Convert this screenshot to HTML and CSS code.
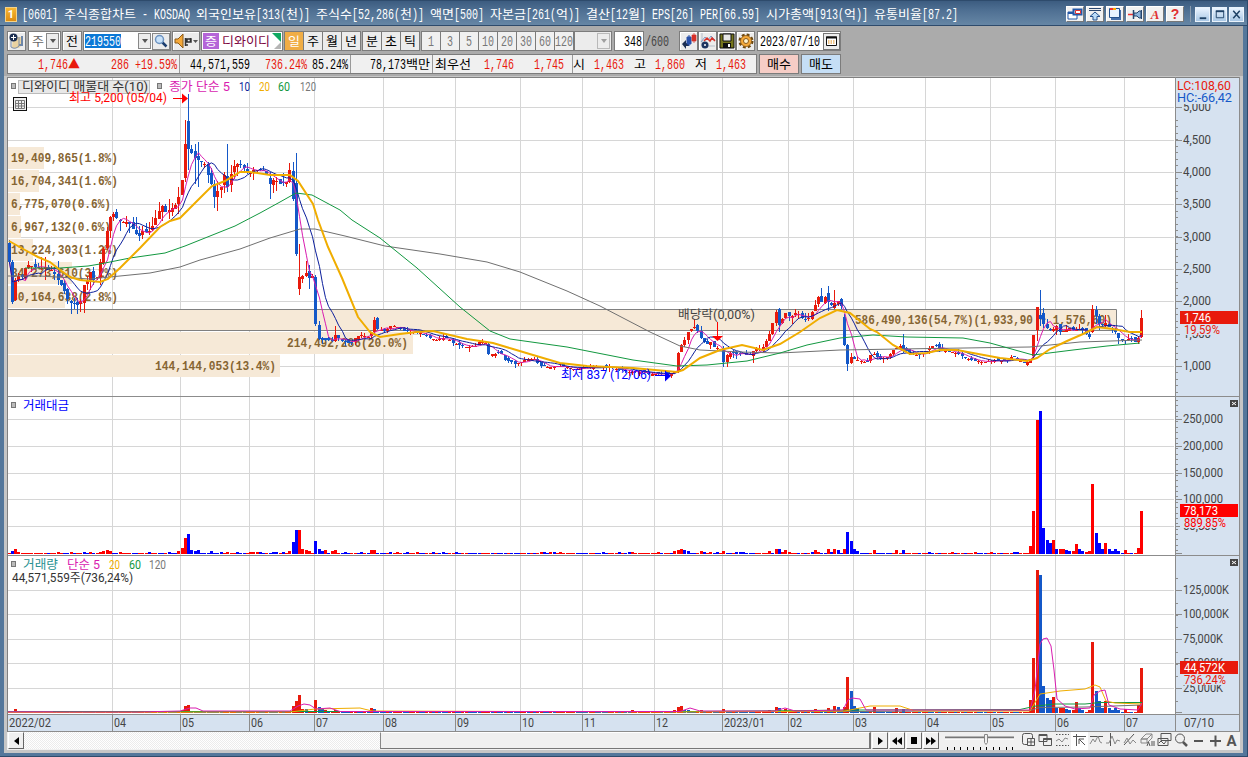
FILE: index.html
```html
<!DOCTYPE html>
<html lang="ko">
<head>
  <meta charset="UTF-8">
  <title>[0601] 주식종합차트</title>
  <link rel="stylesheet" href="styles.css">
</head>
<body>

<div class="window">
  <header class="titlebar">
    <span class="logo">1</span>
    <span class="label title">[0601] 주식종합차트 - KOSDAQ 외국인보유[313(천)] 주식수[52,286(천)] 액면[500] 자본금[261(억)] 결산[12월] EPS[26] PER[66.59] 시가총액[913(억)] 유통비율[87.2]</span>
    <div class="tools">
      <button><svg viewBox="0 0 16 14"><path d="M1 5h9v7H1z" fill="#fff" stroke="#2458a8"/><path d="M1 5h9v2H1z" fill="#2458a8"/><path d="M6.500 2.500h8v5h-8z" fill="#fff" stroke="#2458a8" stroke-width="2"/><path d="M8.500 3.500h5v3h-5z" fill="#fff" stroke="#d33"/></svg></button>
      <button><svg viewBox="0 0 16 14"><path d="M2 1.500h12M2 3.500h12" stroke="#2b4770"/><path d="M8 5l5 4.500h-3V13H6V9.500H3z" fill="#bcdcf8" stroke="#24508c"/></svg></button>
      <button><svg viewBox="0 0 16 14"><path d="M4 3h10v10H4z" fill="#456eaa"/><path d="M2.500 1.500h10v9h-10z" fill="#e8f2ff" stroke="#24508c"/><path d="M3 1h3v2H3z" fill="#e33"/><path d="M6 1h3v2H6z" fill="#fa0"/></svg></button>
      <button><svg viewBox="0 0 16 14"><path d="M1 7.500h5" stroke="#e33" stroke-width="1.500"/><path d="M6.500 3v9" stroke="#24446c" stroke-width="1.500"/><path d="M7 6h3l2-2h2v7h-2l-2-2H7z" fill="#8db4dc" stroke="#24446c"/><path d="M14.500 3v9" stroke="#24446c"/></svg></button>
      <button class="red-letter">A</button>
      <button class="red-letter q">?</button>
    </div>
    <div class="win-buttons">
      <button><svg viewBox="0 0 14 14"><path d="M4 11h7" stroke="#1f4266" stroke-width="2"/></svg></button>
      <button><svg viewBox="0 0 14 14"><path d="M3.500 3.500h8v7h-8z" fill="none" stroke="#1f4266"/><path d="M3 3.500h9" stroke="#1f4266" stroke-width="2"/></svg></button>
      <button><svg viewBox="0 0 14 14"><path d="M3.500 3l7 8M10.500 3l-7 8" stroke="#1f4266" stroke-width="1.600"/></svg></button>
    </div>
  </header>

  <div class="panel">
    <div class="toolbar">
      <button class="box w19"><svg width="15" height="16" viewBox="0 0 15 16"><path d="M4 4h9v8l-3 3H3z" fill="#ead2a0"/><path d="M13 3v9h-3" fill="none" stroke="#6d86a8" stroke-width="2"/><path d="M2 8v6q4 3 8-1V4" fill="none" stroke="#7a8ca8"/><circle cx="4.500" cy="4.500" r="4" fill="#1c2f52"/><path d="M4.500 2v5M2 4.500h5" stroke="#fff"/></svg></button>
      <div class="box white combo w33"><span class="label gray">주</span><i class="drop"></i></div>
      <button class="box w20"><span class="label">전</span></button>
      <div class="box white code"><span class="sel label">219550</span><i class="drop"></i><i class="search"><svg width="14" height="14" viewBox="0 0 14 14"><path d="M8 8l4.500 4.500" stroke="#1d3f70" stroke-width="2.500"/><circle cx="5.500" cy="5.500" r="4" fill="#c8e2fa" stroke="#6d93c0" stroke-width="1.500"/></svg></i></div>
      <button class="box speaker"><svg width="26" height="16" viewBox="0 0 26 16"><path d="M2 6h3l5-5v14l-5-5H2z" fill="#f5a93a" stroke="#8b5a18"/><path d="M12.500 5v8M14 6h4v3h-4zM17.500 5v4M12 12h3" stroke="#333" stroke-width="1.500" fill="none"/><path d="M20 7h5l-2.500 3z" fill="#555"/></svg></button>
      <div class="box white stock"><span class="label badge">증</span><span class="label name">디와이디</span><i class="corner"></i><i class="corner low"></i></div>
      <div class="group"><button class="on"><span class="label">일</span></button><button><span class="label">주</span></button><button><span class="label">월</span></button><button><span class="label">년</span></button></div>
      <div class="group"><button><span class="label">분</span></button><button><span class="label">초</span></button><button><span class="label">틱</span></button></div>
      <div class="group dim"><button><span class="label">1</span></button><button><span class="label">3</span></button><button><span class="label">5</span></button><button><span class="label">10</span></button><button><span class="label">20</span></button><button><span class="label">30</span></button><button><span class="label">60</span></button><button><span class="label">120</span></button></div>
      <div class="box combo off"><i class="drop"></i></div>
      <div class="box white count"><span class="label">348</span></div>
      <span class="label total">/600</span>
      <div class="icons">
        <button class="box w19"><svg width="16" height="16" viewBox="0 0 16 16"><path d="M1 11l4-4v3h3v3H5v3z" fill="#1c2f52"/><path d="M6 4h4v7H6zM8 2v11" fill="#2850a8" stroke="#2850a8"/><path d="M11 2h4v6h-4zM13 0v10" fill="#d8322a" stroke="#d8322a" stroke-width=".7"/></svg></button>
        <button class="box w19"><svg width="16" height="16" viewBox="0 0 16 16"><path d="M2 0v13h13" fill="none" stroke="#b5bdc8"/><path d="M1 9l4-5 3 3 3-4 4 4" fill="none" stroke="#7c9dc8"/><path d="M4 8l3-3 3 3 2-3 3 3" fill="none" stroke="#d8322a" stroke-width="1.500"/><circle cx="5" cy="12" r="3.500" fill="#1d3560"/><circle cx="5" cy="12" r="1" fill="#fff"/></svg></button>
        <button class="box w19"><svg width="16" height="16" viewBox="0 0 16 16"><path d="M1 1h14v14H1z" fill="#75751c" stroke="#111"/><path d="M4 1h8v7H4z" fill="#e8e8e8" stroke="#111"/><path d="M4 10h8v5H4z" fill="#111"/><path d="M9 11h2v3H9z" fill="#fff"/></svg></button>
        <button class="box w19"><svg width="16" height="16" viewBox="0 0 16 16"><circle cx="8" cy="8" r="6" fill="none" stroke="#6b4710" stroke-width="3" stroke-dasharray="2.700 2"/><circle cx="8" cy="8" r="5.500" fill="#f5a93a" stroke="#8b5a18" stroke-width=".8"/><circle cx="8" cy="8" r="2.500" fill="#fff3d0" stroke="#8b5a18"/></svg></button>
      </div>
      <div class="box white date"><span class="label">2023/07/10</span><i class="cal"><svg width="11" height="10" viewBox="0 0 11 10"><path d="M.5 1h10v8.500H.5z" fill="#fff" stroke="#111"/><path d="M0 1.500h11" stroke="#111" stroke-width="2"/><path d="M2 5h7M2 7h7" stroke="#e08a10" stroke-dasharray="1.500 1"/></svg></i></div>
    </div>

    <div class="quotes">
      <div class="strip">
        <div class="cell c1"><span class="label red">1,746▲</span><span class="label red">286 +19.59%</span></div>
        <div class="cell c2"><span class="label">44,571,559</span><span class="label red">736.24%</span><span class="label">85.24%</span></div>
        <div class="cell c3"><span class="label">78,173백만</span></div>
        <div class="cell c4"><span class="label">최우선</span><span class="label red">1,746</span><span class="label red">1,745</span></div>
        <div class="cell c5"><span class="label">시</span><span class="label red">1,463</span><span class="label">고</span><span class="label red">1,860</span><span class="label">저</span><span class="label red">1,463</span></div>
      </div>
      <button class="order buy"><span class="label">매수</span></button>
      <button class="order sell"><span class="label">매도</span></button>
    </div>
  </div>

  <div class="body">
    <svg id="chart" class="chart" viewBox="7 77 1233 655"></svg>

    <div class="bottom">
      <button class="sb"><svg width="5" height="8"><path d="M5 0v8L0 4z"/></svg></button>
      <div class="track"><div class="thumb"></div></div>
      <button class="sb"><svg width="5" height="8"><path d="M0 0v8l5-4z"/></svg></button>
      <button class="sb"><svg width="10" height="8"><path d="M5 0v8L0 4zM10 0v8L5 4z"/></svg></button>
      <button class="sb"><svg width="6" height="7"><path d="M0 0h6v7H0z"/></svg></button>
      <button class="sb"><svg width="10" height="8"><path d="M0 0v8l5-4zM5 0v8l5-4z"/></svg></button>
      <svg class="slider" width="72" height="18" viewBox="0 0 72 18"><path d="M1 5.500h69" stroke="#777" stroke-width="2"/><path d="M1 7h69" stroke="#fff"/><path d="M3.500 15v3M10.500 15v3M16.500 15v3M23.500 15v3M29.500 15v3M36.500 15v3M42.500 15v3M49.500 15v3M55.500 15v3M62.500 15v3M68.500 15v3" stroke="#000"/><path d="M40.500 2.500h3v8l-1.500 2-1.500-2z" fill="#f0f0f0" stroke="#888"/></svg>
      <div class="draw-tools">
        <svg viewBox="0 0 17 18"><path d="M7 12.500H4.500q-2 0-2-2v-7q0-2 2-2h6q2 0 2 2v3M7.500 6.500h7v7h-7zM11 6.500v7M7.500 10h7"/></svg>
        <svg viewBox="0 0 17 18"><path d="M2 2.500h8v7H2zM6.500 6.500h8v7h-8z" fill="#f0f0f0"/><path d="M2 3h8M6.500 7h8" stroke-width="2"/></svg>
        <svg viewBox="0 0 17 18"><path d="M2 2.500h13M2 13.500h13" stroke-dasharray="1.500 1.500"/><path d="M2 9l3-2 3 3 3-4 3 1" stroke="#888"/></svg>
        <svg class="active" viewBox="0 0 17 18"><path d="M2 4.500h13M5.500 2v12M8 7l6 6M8 12V7h5"/></svg>
        <svg viewBox="0 0 17 18"><path d="M2 4.500h13"/><path d="M2 12l3-5 2 3 3-6 2 6 2 1" stroke="#888"/></svg>
        <svg viewBox="0 0 17 18"><path d="M5.500 1v13"/><path d="M1 11h3l3-7 3 8 2-4 3 1" stroke="#888"/></svg>
        <svg viewBox="0 0 17 18"><path d="M2 13L12 2"/><path d="M2 11l3-5 3 6 3-4 3 3" stroke="#888"/></svg>
        <svg viewBox="0 0 17 18"><path d="M2 7l5-5h6L8 7zM2 7h6v4H2zM8 11l5-5V2" stroke="#888"/><path d="M8 14l1.500-4 1.500 4M13 9v5M15 9v5"/></svg>
        <svg viewBox="0 0 17 18"><path d="M5 1.500h10v7H5zM2 6.500h10v7H2z" fill="#f0f0f0"/><path d="M3 11l2-2 3 3 3-4"/></svg>
        <svg viewBox="0 0 17 18"><circle cx="7" cy="6.500" r="4.500"/><path d="M10 10l4 4" stroke-width="2.500"/></svg>
        <svg viewBox="0 0 17 18"><path d="M4 9h9" stroke-width="2"/></svg>
        <svg viewBox="0 0 17 18"><path d="M3 9h11M8.500 3.500v11" stroke-width="2"/></svg>
        <b>A</b>
      </div>
    </div>
  </div>
</div>

<script src="chart.js"></script>
</body>
</html>
```
FILE: styles.css
```css
* {
  box-sizing: border-box;
}
body {
  margin: 0;
  width: 1248px;
  height: 757px;
  overflow: hidden;
  font-family: 'Roboto', 'Noto Sans CJK KR', sans-serif;
  font-size: 12px;
  color: #000;
}
button {
  padding: 0;
  margin: 0;
  font: inherit;
}
.window {
  height: 757px;
  display: flex;
  flex-direction: column;
  padding: 0 4px 3px;
  background: #54779b;
  border: 1px solid #2e4b6c;
  border-width: 1px 1px 1px 0;
}
.label {
  display: inline-flex;
  flex: none;
}
.label svg {
  display: block;
  overflow: visible;
}
.label text {
  fill: currentColor;
}

/* title bar */
.titlebar {
  height: 25px;
  flex: none;
  display: flex;
  align-items: center;
  background: linear-gradient(#3c5c80, #4f7093 40%, #6686a5);
  border-bottom: 1px solid #2e4b6c;
  margin: 0 -4px;
  padding: 2px 5px 0;
  color: #fff;
}
.logo {
  width: 12px;
  height: 15px;
  line-height: 14px;
  text-align: center;
  font-weight: bold;
  font-size: 11px;
  background: linear-gradient(#f7b733, #dd8c11);
  border: 1px solid #f3d28a;
}
.title {
  margin-left: 5px;
}
.tools {
  display: flex;
  gap: 2px;
  margin-left: auto;
  padding-right: 6px;
  border-right: 1px solid #8b9cae;
}
.tools button {
  width: 18px;
  height: 16px;
  border: 1px solid #fff;
  border-right-color: #777;
  border-bottom-color: #777;
  background: #f1f1f1;
}
.tools svg, .win-buttons svg {
  display: block;
  width: 100%;
  height: 100%;
}
.tools .red-letter {
  color: #e03030;
  font: italic bold 13px/13px 'Liberation Serif', serif;
}
.tools .q {
  font: bold 14px/13px 'Liberation Sans', sans-serif;
}
.win-buttons {
  display: flex;
  gap: 2px;
  margin-left: 4px;
  margin-right: -2px;
}
.win-buttons button {
  width: 15px;
  height: 15px;
  border: 1px solid #e9f2fb;
  background: linear-gradient(#eaf4ff, #a9c8e6);
}

/* toolbars */
.panel {
  height: 50px;
  flex: none;
  background: #ababab;
  padding: 5px 3px 0;
}
.toolbar {
  display: flex;
  height: 20px;
}
.box {
  display: flex;
  flex: none;
  align-items: center;
  justify-content: center;
  height: 20px;
  border: 1px solid #7c7c7c;
  background: #ececec;
  box-shadow: inset 1px 1px #fff;
}
.box.white {
  background: #fff;
}
.w19 { width: 19px; }
.w20 { width: 20px; margin: 0 1px; }
.w33 { width: 33px; margin-left: 2px; }
.gray { color: #666; }
.drop {
  width: 13px;
  height: 16px;
  background: #ececec;
  border: 1px solid #888;
  display: flex;
  align-items: center;
  justify-content: center;
}
.drop::after {
  content: '';
  border: 3px solid transparent;
  border-top: 4px solid #555;
  border-bottom: 0;
}
.combo {
  justify-content: space-between;
  padding: 0 1px 0 3px;
}
.code {
  width: 88px;
  justify-content: flex-start;
  padding-left: 1px;
}
.code .drop {
  margin-left: auto;
}
.sel {
  background: #0a78d6;
  color: #fff;
  height: 14px;
  align-items: center;
}
.search {
  width: 18px;
  height: 17px;
  margin-left: 1px;
  border: 1px solid #888;
  background: #ececec;
  display: flex;
  align-items: center;
  justify-content: center;
}
.speaker {
  width: 28px;
  margin: 0 1px;
}
.stock {
  width: 82px;
  justify-content: flex-start;
  position: relative;
}
.badge {
  background: #b565d8;
  color: #fff;
  padding: 0 2px;
  margin-left: 1px;
}
.name {
  color: #7d0542;
  margin-left: 3px;
}
.corner {
  position: absolute;
  right: 1px;
  top: 1px;
  border-top: 9px solid #10a860;
  border-left: 9px solid transparent;
}
.corner.low {
  top: auto;
  bottom: 1px;
  border-top: 0;
  border-left-width: 7px;
  border-bottom: 7px solid #b5b5b5;
}
.group {
  display: flex;
  flex: none;
  border: 1px solid #7c7c7c;
  background: #7c7c7c;
  gap: 1px;
  margin-left: 1px;
}
.group button {
  width: 18px;
  border: 0;
  background: #ececec;
  display: flex;
  align-items: center;
  justify-content: center;
}
.group .on {
  background: #f0ad45;
  color: #fff;
}
.group.dim button {
  background: #f0f0f0;
  color: #777;
}
.combo.off {
  width: 38px;
  background: #ececec;
  justify-content: flex-end;
  box-shadow: none;
}
.off .drop {
  opacity: .5;
}
.count {
  width: 30px;
  margin-left: 2px;
  justify-content: flex-end;
  padding-right: 1px;
}
.total {
  color: #444;
  margin: 2px 0 0 1px;
}
.icons {
  display: flex;
  margin-left: 10px;
}
.date {
  width: 84px;
  margin-left: 2px;
  justify-content: space-between;
  padding-left: 2px;
}
.cal {
  width: 17px;
  height: 17px;
  border: 1px solid #777;
  background: #eee;
  display: flex;
  align-items: center;
  justify-content: center;
}

/* quote strip */
.quotes {
  display: flex;
  gap: 2px;
  margin-top: 3px;
}
.strip {
  width: 750px;
  height: 20px;
  display: flex;
  border: 1px solid #7c7c7c;
  background: #f0f0f0;
}
.cell {
  display: flex;
  align-items: center;
  border-right: 1px solid #999;
}
.red { color: #e8190c; }
.c1 { width: 172px; padding-left: 30px; gap: 31px; }
.c2 { width: 171px; padding-left: 10px; gap: 15px; }
.c2 .label:last-child { margin-left: -10px; }
.c3 { width: 82px; padding-left: 19px; }
.c4 { width: 140px; padding-left: 2px; gap: 20px; }
.c4 .red:nth-child(2) { margin-left: -7px; }
.c5 { width: 183px; padding-left: 0; gap: 10px; border: 0; }
.c5 .label:nth-child(odd) { margin-right: -1px; }
.order {
  width: 40px;
  height: 20px;
  border: 1px solid #7c7c7c;
  display: flex;
  align-items: center;
  justify-content: center;
}
.buy { background: #f6cdc6; }
.sell { background: #c5def5; }

/* chart */
.body {
  flex: 1;
  background: #c6c6c6;
  padding: 1px 3px 0;
}
.chart {
  display: block;
  width: 1233px;
  height: 655px;
}
.chart text {
  font-family: 'Roboto', 'Noto Sans CJK KR', sans-serif;
  font-size: 12.5px;
}
.chart .profile-text {
  font-family: 'Liberation Mono', monospace;
  font-weight: bold;
  font-size: 13px;
}

/* bottom bar */
.bottom {
  height: 18px;
  display: flex;
  background: #f0f0f0;
}
.sb {
  width: 16px;
  height: 17px;
  margin-left: 1px;
  border: 1px solid #fff;
  border-right-color: #666;
  border-bottom-color: #666;
  background: #f0f0f0;
  display: flex;
  align-items: center;
  justify-content: center;
}
.track {
  width: 847px;
  height: 17px;
  padding-left: 356px;
  background: repeating-conic-gradient(#fff 0 25%, #ececec 0 50%) 0 0 / 2px 2px;
}
.thumb {
  height: 17px;
  background: #f0f0f0;
  border: 1px solid #fff;
  border-right: 2px solid #777;
  border-bottom: 1px solid #777;
  border-left-color: #888;
}
.slider {
  margin-left: 5px;
}
.draw-tools {
  display: flex;
  margin-left: 4px;
}
.draw-tools svg {
  width: 17px;
  height: 18px;
  fill: none;
  stroke: #555;
}
.draw-tools .active {
  background: #fff;
}
.draw-tools b {
  width: 15px;
  line-height: 19px;
  text-align: center;
  font-size: 15px;
  color: #555;
}
```
FILE: chart.js
```js
const NS = 'http://www.w3.org/2000/svg';
const RED = '#e81a0c';
const BLUE = '#1458c8';

function add(parent, tag, attrs, text) {
  const node = document.createElementNS(NS, tag);
  for (const k in attrs) node.setAttribute(k, attrs[k]);
  if (text !== undefined) node.textContent = text;
  parent.appendChild(node);
  return node;
}

// Fixed pitch labels: 12px per hangul glyph, 6px for everything else
document.querySelectorAll('.label').forEach(el => {
  const str = el.textContent;
  el.textContent = '';
  const svg = add(el, 'svg', { height: 16 });
  let x = 0;
  (str.match(/[가-힣]+|▲|\s+|[^가-힣▲\s]+/g) || []).forEach(run => {
    const wide = /[가-힣▲]/.test(run);
    const w = run.length * (wide ? 12 : 6);
    if (run.trim()) {
      add(svg, 'text', {
        x: x, y: 12.5, textLength: w, lengthAdjust: 'spacingAndGlyphs',
        style: wide ? 'font:12.5px "Noto Sans CJK KR",sans-serif' : 'font:14px "Liberation Mono",monospace'
      }, run);
    }
    x += w;
  });
  svg.setAttribute('width', x);
});

const chart = document.getElementById('chart');
const rect = (x, y, w, h, fill, more) => add(chart, 'rect', Object.assign({ x, y, width: w, height: h, fill }, more));
const line = (x1, y1, x2, y2, stroke) => add(chart, 'path', { d: `M${x1} ${y1}L${x2} ${y2}`, stroke, fill: 'none' });
const label = (x, y, w, str, fill, cls) => add(chart, 'text', { x, y, textLength: w, lengthAdjust: 'spacingAndGlyphs', fill: fill || '#444', class: cls || '' }, str);
const poly = (pts, stroke, width) => add(chart, 'polyline', { points: pts.join(' '), fill: 'none', stroke, 'stroke-width': width || 1 });

// Backgrounds and grid
rect(7, 77, 1233, 655, '#fff');
rect(1175, 77, 65, 655, '#d6e2f0');
rect(7, 714, 1233, 18, '#d6e2f0');

const months = [[112, '04'], [180, '05'], [249, '06'], [314, '07'], [383, '08'], [455, '09'], [520, '10'], [582, '11'], [654, '12'], [722, '2023/01'], [788, '02'], [853, '03'], [925, '04'], [990, '05'], [1055, '06'], [1124, '07']];
months.forEach(m => line(m[0] + .5, 78, m[0] + .5, 714, '#d6d6d6'));
const priceRows = [[107, '5,000'], [140, '4,500'], [172, '4,000'], [204, '3,500'], [237, '3,000'], [269, '2,500'], [301, '2,000'], [334, '1,500'], [366, '1,000']];
const amountRows = [[419, '250,000'], [446, '200,000'], [473, '150,000'], [499, '100,000'], [526, '50,000']];
const volumeRows = [[590, '125,000K'], [614, '100,000K'], [639, '75,000K'], [663, '50,000K'], [688, '25,000K']];
[...priceRows, ...amountRows, ...volumeRows].forEach(r => line(8, r[0] + .5, 1174, r[0] + .5, '#d6d6d6'));

// Volume profile
const profile = [
  [147, 36, 11, '19,409,865(1.8%)', 107], [170, 31, 11, '16,704,341(1.6%)', 107], [193, 12, 11, '6,775,070(0.6%)', 100],
  [216, 13, 11, '6,967,132(0.6%)', 100], [239, 25, 11, '13,224,303(1.2%)', 107], [262, 64, 11, '34,273,610(3.2%)', 107],
  [286, 57, 11, '30,164,638(2.8%)', 107], [309, 1108, 855, '586,490,136(54,7%)(1,933,90 ~ 1,576,60)', 257],
  [332, 405, 287, '214,492,286(20.0%)', 121], [355, 272, 155, '144,144,053(13.4%)', 121]
];
profile.forEach(p => {
  rect(8, p[0], p[1], 22, '#f6e9d7');
});
add(chart, 'path', { d: 'M8 309.5H1116.5V330.5H8', fill: 'none', stroke: '#808080' });
profile.forEach(p => label(p[2], p[0] + 14.5, p[4], p[3], '#866532', 'profile-text'));

// Close price track, [x, y]
const track = [
  [9, 262], [12, 302], [15, 280], [18, 276], [22, 277], [25, 268], [28, 265], [31, 266], [37, 268], [45, 267], [52, 271], [55, 276], [60, 283], [65, 293], [68, 302], [72, 303], [77, 305], [81, 300], [84, 285], [87, 280], [90, 272], [94, 283], [97, 277], [100, 262], [104, 244], [107, 231], [110, 217], [114, 213], [117, 220], [125, 222], [130, 224], [134, 230], [138, 238], [141, 231], [148, 232], [152, 226], [155, 218], [158, 212], [162, 206], [165, 212], [168, 211], [172, 208], [175, 205], [178, 197], [181, 192], [185, 144], [188, 149], [191, 153], [194, 158], [198, 160], [202, 162], [206, 166], [208, 175], [211, 184], [214, 197], [217, 191], [221, 187], [224, 175], [227, 187], [230, 178], [233, 167], [236, 163], [240, 165], [244, 168], [248, 173], [252, 170], [260, 170], [265, 172], [270, 184], [274, 178], [278, 184], [283, 183], [288, 182], [290, 170], [292, 181], [296, 254], [299, 277], [302, 276], [305, 273], [309, 278], [312, 276], [315, 324], [318, 338], [322, 340], [327, 340], [333, 341], [335, 335], [340, 340], [350, 344], [355, 338], [360, 335], [370, 337], [374, 320], [377, 329], [385, 331], [390, 326], [395, 326], [405, 331], [420, 333], [430, 338], [435, 340], [445, 337], [455, 344], [465, 347], [475, 346], [480, 341], [487, 344], [490, 354], [500, 353], [505, 360], [515, 364], [525, 360], [533, 358], [540, 366], [550, 367], [560, 366], [575, 369], [590, 367], [610, 367], [620, 370], [630, 372], [640, 372], [650, 374], [670, 374], [675, 371], [678, 353], [681, 345], [685, 338], [688, 332], [691, 329], [694, 327], [698, 332], [701, 338], [706, 345], [710, 342], [714, 347], [720, 349], [724, 362], [727, 355], [730, 353], [740, 354], [750, 355], [755, 349], [762, 349], [766, 341], [770, 331], [772, 323], [775, 314], [778, 308], [780, 325], [784, 312], [790, 317], [797, 312], [800, 317], [805, 320], [810, 316], [815, 305], [818, 297], [822, 303], [824, 294], [827, 302], [830, 306], [835, 303], [840, 300], [842, 311], [844, 345], [848, 364], [851, 357], [855, 360], [867, 362], [871, 352], [875, 355], [880, 359], [888, 357], [893, 350], [900, 346], [905, 350], [910, 354], [920, 355], [928, 349], [934, 344], [940, 350], [950, 352], [960, 354], [965, 358], [975, 361], [985, 362], [993, 360], [1008, 361], [1012, 356], [1018, 360], [1025, 363], [1028, 362], [1031, 357], [1033, 335], [1037, 307], [1040, 320], [1046, 327], [1052, 331], [1055, 325], [1060, 332], [1070, 328], [1075, 331], [1080, 328], [1085, 333], [1089, 337], [1092, 309], [1095, 316], [1100, 326], [1105, 323], [1110, 328], [1114, 329], [1117, 338], [1125, 341], [1130, 338], [1135, 342], [1139, 337], [1142, 318]
];
// Candles given in full: x: [open, close, high, low]
const fixed = {
  9: [243, 262, 240, 264], 12: [262, 302, 260, 304], 77: [302, 305, 298, 314], 185: [178, 144, 120, 182], 188: [121, 149, 94, 170], 194: [151, 158, 144, 184], 198: [156, 160, 142, 187],
  214: [184, 197, 180, 208], 217: [197, 191, 181, 211], 227: [176, 187, 144, 192], 270: [178, 184, 172, 199], 290: [182, 170, 163, 183], 296: [183, 254, 153, 256], 299: [289, 277, 244, 295], 306: [276, 273, 261, 277],
  315: [277, 324, 275, 326], 335: [341, 335, 326, 342], 377: [318, 329, 317, 330], 374: [332, 320, 317, 334], 490: [344, 354, 343, 355], 678: [372, 353, 352, 373], 724: [348, 362, 346, 367], 780: [309, 325, 308, 332],
  828: [293, 302, 286, 311], 835: [308, 303, 290, 309], 844: [317, 345, 314, 346], 848: [345, 364, 344, 371], 903: [345, 350, 334, 353], 1033: [356, 335, 335, 358], 1037: [330, 307, 307, 341], 1040: [315, 319, 290, 326], 1043: [313, 324, 308, 328],
  1092: [332, 309, 305, 333], 1095: [310, 316, 306, 324], 1142: [337, 318, 310, 338]
};

let seed = 11;
const rnd = () => (seed = (seed * 16807) % 2147483647) / 2147483647;
const COUNT = 348;
const xs = Array.from({ length: COUNT }, (_, i) => Math.round(8.6 + i * 3.264));

function at(x) {
  let k = 1;
  while (k < track.length - 1 && track[k][0] < x) k++;
  const [x0, y0] = track[k - 1], [x1, y1] = track[k];
  return y0 + (y1 - y0) * Math.min(1, Math.max(0, (x - x0) / (x1 - x0)));
}
const snapped = {};
Object.keys(fixed).forEach(k => {
  const i = Math.round((k - 9) / 3.265);
  snapped[i] = fixed[k];
});
const closes = xs.map((x, i) => snapped[i] ? snapped[i][1] : Math.round(at(x)));

function average(n) {
  const out = [];
  for (let i = 0; i < COUNT; i++) {
    const part = closes.slice(Math.max(0, i - n + 1), i + 1);
    out.push(`${xs[i] + .5},${(part.reduce((a, b) => a + b) / part.length).toFixed(1)}`);
  }
  return out;
}

xs.forEach((x, i) => {
  let o, c, hi, lo;
  if (snapped[i]) {
    [o, c, hi, lo] = snapped[i];
  } else {
    c = closes[i];
    o = i ? closes[i - 1] + Math.round(rnd() * 4 - 2) : c;
    const v = x < 315 ? 11 : x > 1040 || (x > 678 && x < 850) ? 7 : 4;
    hi = Math.min(o, c) - Math.round(rnd() * rnd() * v * 1.3);
    lo = Math.max(o, c) + Math.round(rnd() * rnd() * v * 1.3);
  }
  const color = c <= o ? RED : BLUE;
  rect(x, hi, 1, Math.max(1, lo - hi), color);
  rect(x - 1, Math.min(o, c), 3, Math.max(1, Math.abs(c - o)), color);
});

// Moving averages
poly(average(5), '#d91cb0');
poly(average(10), '#0c1f9c');
poly(['8,276', '40,276', '90,279', '120,276', '150,273', '180,267', '200,260', '240,249', '270,238', '300,229', '315,229', '345,236', '385,246', '440,254', '487,262', '520,272', '567,291', '600,306', '650,332', '680,346', '700,350', '740,352', '780,353', '840,350', '900,349', '1030,347', '1050,345', '1080,342', '1142,340'], '#707070');
poly(['25,268', '60,268', '88,266', '100,264', '130,258', '165,253', '185,246', '210,236', '235,226', '260,213', '280,202', '296,193', '312,195', '340,210', '352,220', '380,238', '417,268', '460,307', '490,331', '510,339', '567,347', '633,360', '677,366', '707,365', '747,361', '780,353', '807,345', '840,338', '873,335', '907,337', '963,338', '990,343', '1033,355', '1073,350', '1107,346', '1140,343'], '#129840');
poly(['9,241', '25,250', '38,257', '50,262', '60,270', '70,277', '80,280', '100,282', '108,279', '120,268', '140,248', '160,227', '170,221', '180,218', '190,208', '200,198', '212,186', '225,181', '240,172', '250,172', '270,175', '290,175', '298,181', '313,204', '318,220', '328,247', '342,278', '358,317', '370,332', '380,337', '400,334', '417,332', '433,331', '467,339', '493,343', '513,349', '533,355', '560,363', '587,366', '633,368', '677,372', '683,370', '700,358', '720,350', '742,345', '763,350', '780,344', '800,332', '820,318', '837,310', '850,313', '870,329', '877,332', '893,345', '910,354', '927,353', '940,350', '957,350', '973,353', '1000,358', '1027,361', '1037,358', '1050,349', '1067,341', '1083,334', '1097,327', '1113,329', '1130,332', '1142,332'], '#f0ad00', 2);

// Amount and volume bars, [x, amount height, volume height, amount colour, volume colour]
const bars = [
  [12, 3, 2, 'b'], [15, 5, 4, 'r'], [18, 2, 2], [103, 3, 1, 'r'], [107, 4, 2, 'r'], [110, 3, 1, 'r'], [178, 3, 1, 'r'], [181, 6, 3, 'r'], [185, 16, 7, 'r'], [188, 20, 8, 'b', 'r'], [191, 4, 2, 'b'], [195, 3, 1, 'b'], [199, 4, 1, 'b'], [211, 3, 1, 'b'],
  [289, 3, 1, 'r'], [292, 12, 7, 'b', 'r'], [296, 24, 12, 'b', 'r'], [299, 24, 18, 'r'], [302, 5, 4, 'r'], [306, 4, 4, 'r', 'b'], [309, 3, 2, 'r'], [315, 13, 13, 'b', 'r'], [318, 5, 6, 'b'], [322, 3, 4, 'b'], [325, 4, 3, 'r'], [332, 3, 2, 'r'], [335, 4, 3, 'r'], [370, 4, 5, 'r'], [374, 4, 4, 'r', 'b'],
  [632, 2, 3, 'r'], [675, 3, 3, 'r'], [678, 4, 6, 'r'], [681, 5, 7, 'r'], [685, 4, 3, 'b'], [688, 3, 3, 'b'], [700, 3, 3, 'r'], [723, 3, 4, 'r'], [770, 3, 3, 'r'], [775, 5, 6, 'r'], [778, 6, 7, 'r'], [781, 5, 5, 'b'], [785, 4, 4, 'r'], [815, 4, 4, 'r'], [828, 5, 5, 'r'], [834, 5, 7, 'r'], [838, 4, 6, 'b'], [845, 5, 6, 'r'],
  [848, 22, 36, 'b', 'r'], [851, 13, 22, 'b'], [855, 5, 7, 'b'], [858, 3, 5, 'b'], [873, 4, 6, 'r'], [897, 4, 5, 'r'], [903, 4, 4, 'b'],
  [1030, 8, 13, 'r'], [1033, 43, 55, 'r'], [1037, 134, 143, 'r'], [1040, 143, 138, 'b'], [1043, 26, 27, 'b'], [1046, 14, 15, 'b'], [1050, 11, 13, 'b'], [1053, 14, 16, 'r'], [1056, 5, 5, 'b'], [1060, 5, 5, 'r'], [1063, 5, 5, 'r'], [1066, 4, 4, 'b'], [1069, 3, 3, 'b'], [1073, 3, 3, 'r'], [1076, 10, 11, 'r'], [1079, 5, 5, 'b'], [1082, 3, 3, 'b'], [1089, 3, 3, 'r'],
  [1092, 70, 71, 'r'], [1095, 21, 22, 'b'], [1099, 11, 12, 'b'], [1102, 5, 5, 'b'], [1105, 11, 12, 'r'], [1108, 5, 5, 'b'], [1112, 3, 3, 'b'], [1115, 5, 5, 'b'], [1118, 3, 3, 'b'], [1125, 4, 4, 'r'], [1138, 6, 8, 'r'], [1142, 43, 45, 'r']
];
const spikes = {};
bars.forEach(b => spikes[Math.round((b[0] - 9) / 3.265)] = b);
xs.forEach((x, i) => {
  const s = spikes[i] || [x, rnd() > .8 ? 2 : 1, 1, rnd() > .5 ? 'r' : 'b'];
  rect(x - 1, 554 - s[1], 3, s[1], s[3] === 'b' ? '#0000ff' : '#ff0000');
  rect(x - 1, 713 - s[2], 3, s[2], (s[4] || s[3]) === 'b' ? BLUE : RED);
});
poly(['8,711.5', '860,711.5', '1030,710.5', '1040,707.5', '1085,707', '1142,705'], '#707070');
poly(['53,711.5', '315,711.5', '700,711.5', '860,710', '1020,709.5', '1036,706', '1055,704', '1085,704', '1100,702.5', '1142,702.5'], '#129840');
poly(['8,712.5', '290,712', '315,709', '360,708', '372,711', '680,712', '845,711', '870,706', '900,706', '915,711', '1030,711', '1040,694', '1060,691', '1085,689', '1095,685', '1100,687', '1106,701', '1115,703', '1142,704'], '#f0ad00');
poly(['8,712', '140,712', '180,711', '190,708', '196,708', '203,711', '290,711', '298,706', '304,704', '310,705', '316,709', '330,708', '340,711.5', '680,711.5', '690,708', '700,711', '775,711', '785,708', '795,711', '843,710', '848,700', '852,698', '860,699', '866,710', '1030,710', '1035,690', '1040,644', '1043,639', '1047,638', '1051,646', '1054,670', '1057,699', '1065,706', '1075,709', '1090,708', '1094,695', '1100,691', '1105,690', '1109,705', '1120,709', '1138,710', '1142,703'], '#d91cb0');

// Frames and axis ticks
[396, 555, 714, 731].forEach(y => line(7, y + .5, 1240, y + .5, '#8c8c8c'));
line(7, 77.5, 1240, 77.5, '#808080');
line(7.5, 77, 7.5, 732, '#808080');
line(1239.5, 77, 1239.5, 732, '#8c8c8c');
line(1175.5, 77, 1175.5, 732, '#8c8c8c');
months.forEach(m => {
  line(m[0] + .5, 714, m[0] + .5, 731, '#8c8c8c');
  label(m[0] + 2, 727, m[1].length > 2 ? 41 : 12, m[1]);
});
label(9, 727, 42, '2022/02');
label(1184, 727, 30, '07/10');

function axis(rows, step, from, to) {
  for (let y = from; y < to; y += step) line(1176, Math.round(y) + .5, 1178, Math.round(y) + .5, '#8c8c8c');
  rows.forEach(r => {
    line(1176, r[0] + .5, 1182, r[0] + .5, '#8c8c8c');
    const w = r[1].length * 6 - 2;
    label(1183, r[0] + 3.5, w, r[1]);
  });
}
axis(priceRows, 6.47, 120, 394);
axis(amountRows, 5.36, 400, 552);
axis(volumeRows, 12.25, 578, 712);
line(1176, 553.5, 1182, 553.5, '#8c8c8c');
line(1176, 712.5, 1182, 712.5, '#8c8c8c');

// Current value tags
function tag(y, value, rate, fill, w) {
  rect(1180, y + 13, 54, 11, '#d6e2f0');
  rect(1180, y, 58, 13, fill);
  label(1184, y + 11, w, value, '#fff');
  label(1184, y + 23, rate.length * 6, rate, fill);
}
tag(311, '1,746', '19,59%', RED, 27);
tag(504, '78,173', '889,85%', '#ff0000', 34);
tag(661, '44,572K', '736,24%', RED, 41);
rect(1176, 79, 62, 25, '#d6e2f0');
label(1177, 90, 54, 'LC:108,60', RED);
label(1177, 102, 55, 'HC:-66,42', BLUE);
[399, 558].forEach(y => {
  rect(1230, y + 1, 8, 7, '#444');
  add(chart, 'path', { d: `M1232 ${y + 3}l4 3M1236 ${y + 3}l-4 3`, stroke: '#fff' });
});

// Legends
const bullet = (x, y) => rect(x + .5, y + .5, 4, 5, '#bbb', { stroke: '#777' });
bullet(11, 83);
rect(18.5, 80.5, 131, 13, '#e8e8e8', { stroke: '#bbb' });
label(22, 91, 126, '디와이디 매물대 수(10)', '#333');
bullet(157, 83);
label(169, 91, 61, '종가 단순 5', '#d91cb0');
label(239, 91, 11, '10', '#0c1f9c');
label(259, 91, 11, '20', '#f0ad00');
label(278, 91, 12, '60', '#129840');
label(300, 91, 16, '120', '#777');
rect(13.5, 97.5, 13, 13, '#eee', { stroke: '#111' });
add(chart, 'path', { d: 'M15.5 100.5h9v8h-9zM15.5 103.5h9M15.5 106h9M18.5 100v8M21.5 100v8', fill: 'none', stroke: '#777' });

label(69, 102, 98, '최고 5,200 (05/04)', '#f00');
add(chart, 'path', { d: 'M173 98.5h10', stroke: '#f00' });
add(chart, 'path', { d: 'M182 93.5v10l6-5z', fill: '#f00' });
label(561, 379, 90, '최저 837 (12/06)', '#00f');
add(chart, 'path', { d: 'M655 375.5h12', stroke: '#00f' });
add(chart, 'path', { d: 'M665 370.5v11l6-5.5z', fill: '#00f' });
label(678, 319, 77, '배당락(0,00%)', '#444');
add(chart, 'path', { d: 'M717.5 322v15', stroke: '#f00' });
add(chart, 'path', { d: 'M712 336h11l-5.5 5z', fill: '#f00' });

bullet(11, 402);
label(23, 410, 46, '거래대금', '#00f');
bullet(11, 561);
label(23, 569, 35, '거래량', '#2a9292');
label(67, 569, 33, '단순 5', '#d91cb0');
label(109, 569, 11, '20', '#f0ad00');
label(129, 569, 12, '60', '#129840');
label(149, 569, 17, '120', '#777');
label(12, 582, 121, '44,571,559주(736,24%)', '#333');
```
